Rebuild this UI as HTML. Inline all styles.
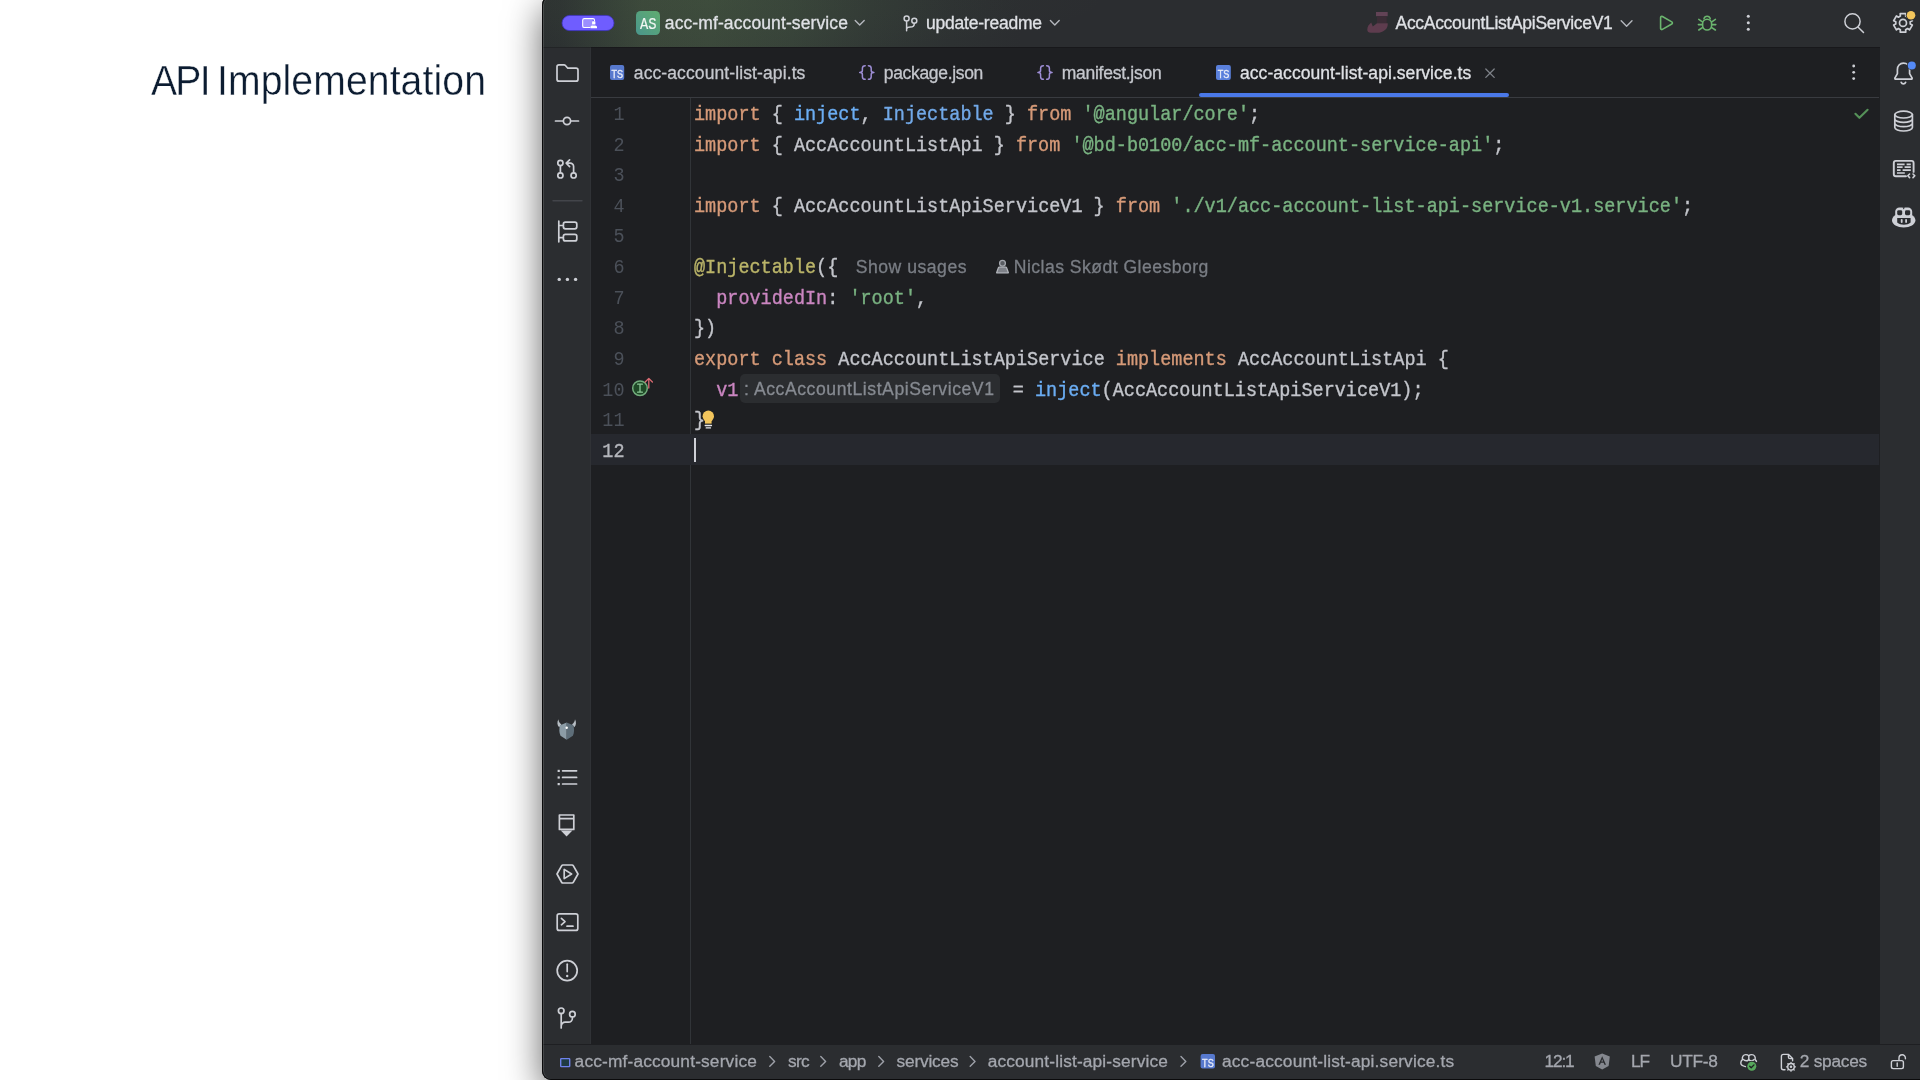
<!DOCTYPE html>
<html><head><meta charset="utf-8"><title>API Implementation</title>
<style>
html,body{margin:0;padding:0}
body{width:1920px;height:1080px;overflow:hidden;position:relative;background:#fff;font-family:"Liberation Sans",sans-serif}
.t{position:absolute;white-space:pre;line-height:1;font-family:"Liberation Sans",sans-serif;-webkit-text-stroke-width:.3px}
.a{position:absolute}
#win{position:absolute;left:542px;top:-4px;width:1400px;height:1084px;background:#1E1F22;border-radius:9px 0 0 9px;box-shadow:0 12px 36px 0 rgba(0,0,0,.6);overflow:hidden}
#wi{position:absolute;left:0;top:4px;width:1400px;height:1080px}
#wi>div{position:absolute}
svg{position:absolute;overflow:visible}
</style></head>
<body>
<div id="win"><div id="wi">
 <div style="left:0;top:0;width:1400px;height:47px;background:#2B2D30"></div>
 <div style="left:0;top:0;width:700px;height:47px;background:linear-gradient(90deg,#2C3031 0,#2D3232 20px,#333C36 58px,#3A463A 100px,#3B483B 170px,#374239 250px,#313835 330px,#2D3132 410px,#2B2D30 480px)"></div>
 <div style="left:0;top:0;width:700px;height:47px;background:radial-gradient(ellipse 400px 52px at 170px 0,rgba(100,135,80,.07),rgba(100,135,80,0))"></div>
 <div style="left:0;top:47px;width:48px;height:997px;background:#2B2D30;border-right:1px solid #303236"></div>
 <div style="left:0;top:47px;width:1400px;height:1px;background:rgba(0,0,0,.2)"></div>
 <div style="left:1338px;top:47px;width:62px;height:997px;background:#2B2D30"></div>
 <div style="left:49px;top:97px;width:1288px;height:1px;background:#393B40"></div>
 <div style="left:148px;top:98px;width:1px;height:946px;background:#313438"></div>
 <div style="left:49px;top:434px;width:1288px;height:31px;background:#26282E"></div>
 <div style="left:657px;top:92.5px;width:310px;height:4.5px;background:#4A78E8;border-radius:2px"></div>
 <div style="left:0;top:1044px;width:1400px;height:36px;background:#2B2D30;border-top:1px solid #1E1F22"></div>
 </div>
 <div style="position:absolute;left:0;top:0;width:1399px;height:1082px;border:1px solid #0b0b0c;border-right:0;border-radius:9px 0 0 9px;box-shadow:inset 1px 0 0 rgba(255,255,255,.13)"></div>
</div>
<div class="a" style="left:694px;top:438px;width:2px;height:24px;background:#CED0D6"></div>
<div id="txt" style="position:absolute;left:0;top:0;width:1920px;height:1080px;will-change:transform">
<span class="t" style='left:150.80px;top:59px;font-size:43px;color:#0C1C31;letter-spacing:-1.932px;transform:scale(0.91,1);transform-origin:0 36px;-webkit-text-stroke:.4px #fff;'>API</span><span class="t" style='left:217.00px;top:59px;font-size:43px;color:#0C1C31;letter-spacing:0.115px;transform:scale(0.91,1);transform-origin:0 36px;-webkit-text-stroke:.4px #fff;'>Implementation</span>
<span class="t" style='left:613.40px;top:107px;font-size:18.5px;color:#4B5059;font-family:"Liberation Mono", monospace;letter-spacing:-0.009px;transform:scale(1,1.1);transform-origin:0 13px;-webkit-text-stroke-width:0;'>1</span><span class="t" style='left:613.40px;top:138px;font-size:18.5px;color:#4B5059;font-family:"Liberation Mono", monospace;letter-spacing:-0.009px;transform:scale(1,1.1);transform-origin:0 13px;-webkit-text-stroke-width:0;'>2</span><span class="t" style='left:613.40px;top:168px;font-size:18.5px;color:#4B5059;font-family:"Liberation Mono", monospace;letter-spacing:-0.009px;transform:scale(1,1.1);transform-origin:0 13px;-webkit-text-stroke-width:0;'>3</span><span class="t" style='left:613.40px;top:199px;font-size:18.5px;color:#4B5059;font-family:"Liberation Mono", monospace;letter-spacing:-0.009px;transform:scale(1,1.1);transform-origin:0 13px;-webkit-text-stroke-width:0;'>4</span><span class="t" style='left:613.40px;top:229px;font-size:18.5px;color:#4B5059;font-family:"Liberation Mono", monospace;letter-spacing:-0.009px;transform:scale(1,1.1);transform-origin:0 13px;-webkit-text-stroke-width:0;'>5</span><span class="t" style='left:613.40px;top:260px;font-size:18.5px;color:#4B5059;font-family:"Liberation Mono", monospace;letter-spacing:-0.009px;transform:scale(1,1.1);transform-origin:0 13px;-webkit-text-stroke-width:0;'>6</span><span class="t" style='left:613.40px;top:291px;font-size:18.5px;color:#4B5059;font-family:"Liberation Mono", monospace;letter-spacing:-0.009px;transform:scale(1,1.1);transform-origin:0 13px;-webkit-text-stroke-width:0;'>7</span><span class="t" style='left:613.40px;top:321px;font-size:18.5px;color:#4B5059;font-family:"Liberation Mono", monospace;letter-spacing:-0.009px;transform:scale(1,1.1);transform-origin:0 13px;-webkit-text-stroke-width:0;'>8</span><span class="t" style='left:613.40px;top:352px;font-size:18.5px;color:#4B5059;font-family:"Liberation Mono", monospace;letter-spacing:-0.009px;transform:scale(1,1.1);transform-origin:0 13px;-webkit-text-stroke-width:0;'>9</span><span class="t" style='left:602.30px;top:383px;font-size:18.5px;color:#4B5059;font-family:"Liberation Mono", monospace;letter-spacing:-0.009px;transform:scale(1,1.1);transform-origin:0 13px;-webkit-text-stroke-width:0;'>10</span><span class="t" style='left:602.30px;top:413px;font-size:18.5px;color:#4B5059;font-family:"Liberation Mono", monospace;letter-spacing:-0.009px;transform:scale(1,1.1);transform-origin:0 13px;-webkit-text-stroke-width:0;'>11</span><span class="t" style='left:602.30px;top:444px;font-size:18.5px;color:#B4B6BC;font-family:"Liberation Mono", monospace;letter-spacing:-0.009px;transform:scale(1,1.1);transform-origin:0 13px;-webkit-text-stroke-width:.35px;'>12</span>
<span class="t" style='left:694.00px;top:107px;font-size:18.5px;color:#D69A78;font-family:"Liberation Mono", monospace;transform:scale(1,1.1);transform-origin:0 13px;-webkit-text-stroke-width:.35px;'>import</span><span class="t" style='left:771.70px;top:107px;font-size:18.5px;color:#C3C5CB;font-family:"Liberation Mono", monospace;letter-spacing:-0.009px;transform:scale(1,1.1);transform-origin:0 13px;-webkit-text-stroke-width:.35px;'>{</span><span class="t" style='left:793.90px;top:107px;font-size:18.5px;color:#6BADF3;font-family:"Liberation Mono", monospace;transform:scale(1,1.1);transform-origin:0 13px;-webkit-text-stroke-width:.35px;'>inject</span><span class="t" style='left:860.50px;top:107px;font-size:18.5px;color:#C3C5CB;font-family:"Liberation Mono", monospace;letter-spacing:-0.009px;transform:scale(1,1.1);transform-origin:0 13px;-webkit-text-stroke-width:.35px;'>,</span><span class="t" style='left:882.70px;top:107px;font-size:18.5px;color:#72A9E8;font-family:"Liberation Mono", monospace;transform:scale(1,1.1);transform-origin:0 13px;-webkit-text-stroke-width:.35px;'>Injectable</span><span class="t" style='left:1004.80px;top:107px;font-size:18.5px;color:#C3C5CB;font-family:"Liberation Mono", monospace;letter-spacing:-0.009px;transform:scale(1,1.1);transform-origin:0 13px;-webkit-text-stroke-width:.35px;'>}</span><span class="t" style='left:1027.00px;top:107px;font-size:18.5px;color:#D69A78;font-family:"Liberation Mono", monospace;letter-spacing:-0.005px;transform:scale(1,1.1);transform-origin:0 13px;-webkit-text-stroke-width:.35px;'>from</span><span class="t" style='left:1082.50px;top:107px;font-size:18.5px;color:#79B281;font-family:"Liberation Mono", monospace;transform:scale(1,1.1);transform-origin:0 13px;-webkit-text-stroke-width:.35px;'>'@angular/core'</span><span class="t" style='left:1249.00px;top:107px;font-size:18.5px;color:#C3C5CB;font-family:"Liberation Mono", monospace;letter-spacing:-0.009px;transform:scale(1,1.1);transform-origin:0 13px;-webkit-text-stroke-width:.35px;'>;</span><span class="t" style='left:694.00px;top:138px;font-size:18.5px;color:#D69A78;font-family:"Liberation Mono", monospace;transform:scale(1,1.1);transform-origin:0 13px;-webkit-text-stroke-width:.35px;'>import</span><span class="t" style='left:771.70px;top:138px;font-size:18.5px;color:#C3C5CB;font-family:"Liberation Mono", monospace;letter-spacing:-0.009px;transform:scale(1,1.1);transform-origin:0 13px;-webkit-text-stroke-width:.35px;'>{</span><span class="t" style='left:793.90px;top:138px;font-size:18.5px;color:#C3C5CB;font-family:"Liberation Mono", monospace;transform:scale(1,1.1);transform-origin:0 13px;-webkit-text-stroke-width:.35px;'>AccAccountListApi</span><span class="t" style='left:993.70px;top:138px;font-size:18.5px;color:#C3C5CB;font-family:"Liberation Mono", monospace;letter-spacing:-0.009px;transform:scale(1,1.1);transform-origin:0 13px;-webkit-text-stroke-width:.35px;'>}</span><span class="t" style='left:1015.90px;top:138px;font-size:18.5px;color:#D69A78;font-family:"Liberation Mono", monospace;letter-spacing:-0.005px;transform:scale(1,1.1);transform-origin:0 13px;-webkit-text-stroke-width:.35px;'>from</span><span class="t" style='left:1071.40px;top:138px;font-size:18.5px;color:#79B281;font-family:"Liberation Mono", monospace;transform:scale(1,1.1);transform-origin:0 13px;-webkit-text-stroke-width:.35px;'>'@bd-b0100/acc-mf-account-service-api'</span><span class="t" style='left:1493.20px;top:138px;font-size:18.5px;color:#C3C5CB;font-family:"Liberation Mono", monospace;letter-spacing:-0.009px;transform:scale(1,1.1);transform-origin:0 13px;-webkit-text-stroke-width:.35px;'>;</span><span class="t" style='left:694.00px;top:199px;font-size:18.5px;color:#D69A78;font-family:"Liberation Mono", monospace;transform:scale(1,1.1);transform-origin:0 13px;-webkit-text-stroke-width:.35px;'>import</span><span class="t" style='left:771.70px;top:199px;font-size:18.5px;color:#C3C5CB;font-family:"Liberation Mono", monospace;letter-spacing:-0.009px;transform:scale(1,1.1);transform-origin:0 13px;-webkit-text-stroke-width:.35px;'>{</span><span class="t" style='left:793.90px;top:199px;font-size:18.5px;color:#C3C5CB;font-family:"Liberation Mono", monospace;transform:scale(1,1.1);transform-origin:0 13px;-webkit-text-stroke-width:.35px;'>AccAccountListApiServiceV1</span><span class="t" style='left:1093.60px;top:199px;font-size:18.5px;color:#C3C5CB;font-family:"Liberation Mono", monospace;letter-spacing:-0.009px;transform:scale(1,1.1);transform-origin:0 13px;-webkit-text-stroke-width:.35px;'>}</span><span class="t" style='left:1115.80px;top:199px;font-size:18.5px;color:#D69A78;font-family:"Liberation Mono", monospace;letter-spacing:-0.005px;transform:scale(1,1.1);transform-origin:0 13px;-webkit-text-stroke-width:.35px;'>from</span><span class="t" style='left:1171.30px;top:199px;font-size:18.5px;color:#79B281;font-family:"Liberation Mono", monospace;transform:scale(1,1.1);transform-origin:0 13px;-webkit-text-stroke-width:.35px;'>'./v1/acc-account-list-api-service-v1.service'</span><span class="t" style='left:1681.90px;top:199px;font-size:18.5px;color:#C3C5CB;font-family:"Liberation Mono", monospace;letter-spacing:-0.009px;transform:scale(1,1.1);transform-origin:0 13px;-webkit-text-stroke-width:.35px;'>;</span><span class="t" style='left:694.00px;top:260px;font-size:18.5px;color:#BBB569;font-family:"Liberation Mono", monospace;transform:scale(1,1.1);transform-origin:0 13px;-webkit-text-stroke-width:.35px;'>@Injectable</span><span class="t" style='left:816.10px;top:260px;font-size:18.5px;color:#C3C5CB;font-family:"Liberation Mono", monospace;letter-spacing:-0.009px;transform:scale(1,1.1);transform-origin:0 13px;-webkit-text-stroke-width:.35px;'>({</span><span class="t" style='left:716.20px;top:291px;font-size:18.5px;color:#CB86C1;font-family:"Liberation Mono", monospace;transform:scale(1,1.1);transform-origin:0 13px;-webkit-text-stroke-width:.35px;'>providedIn</span><span class="t" style='left:827.20px;top:291px;font-size:18.5px;color:#C3C5CB;font-family:"Liberation Mono", monospace;letter-spacing:-0.009px;transform:scale(1,1.1);transform-origin:0 13px;-webkit-text-stroke-width:.35px;'>:</span><span class="t" style='left:849.40px;top:291px;font-size:18.5px;color:#79B281;font-family:"Liberation Mono", monospace;transform:scale(1,1.1);transform-origin:0 13px;-webkit-text-stroke-width:.35px;'>'root'</span><span class="t" style='left:916.00px;top:291px;font-size:18.5px;color:#C3C5CB;font-family:"Liberation Mono", monospace;letter-spacing:-0.009px;transform:scale(1,1.1);transform-origin:0 13px;-webkit-text-stroke-width:.35px;'>,</span><span class="t" style='left:694.00px;top:321px;font-size:18.5px;color:#C3C5CB;font-family:"Liberation Mono", monospace;letter-spacing:-0.009px;transform:scale(1,1.1);transform-origin:0 13px;-webkit-text-stroke-width:.35px;'>})</span><span class="t" style='left:694.00px;top:352px;font-size:18.5px;color:#D69A78;font-family:"Liberation Mono", monospace;transform:scale(1,1.1);transform-origin:0 13px;-webkit-text-stroke-width:.35px;'>export</span><span class="t" style='left:771.70px;top:352px;font-size:18.5px;color:#D69A78;font-family:"Liberation Mono", monospace;transform:scale(1,1.1);transform-origin:0 13px;-webkit-text-stroke-width:.35px;'>class</span><span class="t" style='left:838.30px;top:352px;font-size:18.5px;color:#C3C5CB;font-family:"Liberation Mono", monospace;transform:scale(1,1.1);transform-origin:0 13px;-webkit-text-stroke-width:.35px;'>AccAccountListApiService</span><span class="t" style='left:1115.80px;top:352px;font-size:18.5px;color:#D69A78;font-family:"Liberation Mono", monospace;transform:scale(1,1.1);transform-origin:0 13px;-webkit-text-stroke-width:.35px;'>implements</span><span class="t" style='left:1237.90px;top:352px;font-size:18.5px;color:#C3C5CB;font-family:"Liberation Mono", monospace;transform:scale(1,1.1);transform-origin:0 13px;-webkit-text-stroke-width:.35px;'>AccAccountListApi</span><span class="t" style='left:1437.70px;top:352px;font-size:18.5px;color:#C3C5CB;font-family:"Liberation Mono", monospace;letter-spacing:-0.009px;transform:scale(1,1.1);transform-origin:0 13px;-webkit-text-stroke-width:.35px;'>{</span><span class="t" style='left:716.20px;top:383px;font-size:18.5px;color:#CB86C1;font-family:"Liberation Mono", monospace;letter-spacing:-0.009px;transform:scale(1,1.1);transform-origin:0 13px;-webkit-text-stroke-width:.35px;'>v1</span><span class="t" style='left:1012.80px;top:383px;font-size:18.5px;color:#C3C5CB;font-family:"Liberation Mono", monospace;letter-spacing:-0.009px;transform:scale(1,1.1);transform-origin:0 13px;-webkit-text-stroke-width:.35px;'>=</span><span class="t" style='left:1035.00px;top:383px;font-size:18.5px;color:#6BADF3;font-family:"Liberation Mono", monospace;transform:scale(1,1.1);transform-origin:0 13px;-webkit-text-stroke-width:.35px;'>inject</span><span class="t" style='left:1101.60px;top:383px;font-size:18.5px;color:#C3C5CB;font-family:"Liberation Mono", monospace;transform:scale(1,1.1);transform-origin:0 13px;-webkit-text-stroke-width:.35px;'>(AccAccountListApiServiceV1);</span><span class="t" style='left:694.00px;top:413px;font-size:18.5px;color:#C3C5CB;font-family:"Liberation Mono", monospace;letter-spacing:-0.009px;transform:scale(1,1.1);transform-origin:0 13px;-webkit-text-stroke-width:.35px;'>}</span>
<span class="t" style='left:855.80px;top:259px;font-size:17.6px;color:#7A7E85;letter-spacing:0.505px;'>Show usages</span><span class="t" style='left:1013.80px;top:259px;font-size:17.6px;color:#7A7E85;letter-spacing:0.463px;'>Niclas Skødt Gleesborg</span><div style="position:absolute;left:740px;top:374px;width:260px;height:29px;background:#2B2D30;border-radius:5px"></div><span class="t" style='left:744.00px;top:381px;font-size:17.6px;color:#868A91;letter-spacing:0.564px;'>: AccAccountListApiServiceV1</span>
<span class="t" style='left:664.80px;top:15px;font-size:17.5px;color:#DFE1E5;letter-spacing:0.105px;'>acc-mf-account-service</span><span class="t" style='left:926.00px;top:15px;font-size:17.5px;color:#DFE1E5;letter-spacing:-0.223px;'>update-readme</span><span class="t" style='left:1395.50px;top:15px;font-size:17.5px;color:#DFE1E5;letter-spacing:-0.296px;'>AccAccountListApiServiceV1</span>
<span class="t" style='left:633.80px;top:65px;font-size:17.5px;color:#C5C7CD;letter-spacing:0.107px;'>acc-account-list-api.ts</span><span class="t" style='left:883.80px;top:65px;font-size:17.5px;color:#C5C7CD;letter-spacing:-0.328px;'>package.json</span><span class="t" style='left:1061.70px;top:65px;font-size:17.5px;color:#C5C7CD;letter-spacing:-0.262px;'>manifest.json</span><span class="t" style='left:1240.00px;top:65px;font-size:17.5px;color:#DFE1E5;letter-spacing:0.057px;'>acc-account-list-api.service.ts</span>
<span class="t" style='left:574.60px;top:1053px;font-size:17.3px;color:#A4A7AE;letter-spacing:0.172px;'>acc-mf-account-service</span><span class="t" style='left:788.00px;top:1053px;font-size:17.3px;color:#A4A7AE;letter-spacing:-0.682px;'>src</span><span class="t" style='left:839.00px;top:1053px;font-size:17.3px;color:#A4A7AE;letter-spacing:-0.781px;'>app</span><span class="t" style='left:896.50px;top:1053px;font-size:17.3px;color:#A4A7AE;letter-spacing:-0.174px;'>services</span><span class="t" style='left:987.70px;top:1053px;font-size:17.3px;color:#A4A7AE;letter-spacing:0.149px;'>account-list-api-service</span><span class="t" style='left:1222.00px;top:1053px;font-size:17.3px;color:#A4A7AE;letter-spacing:0.185px;'>acc-account-list-api.service.ts</span><span class="t" style='left:1544.50px;top:1053px;font-size:17.3px;color:#A4A7AE;letter-spacing:-1.135px;'>12:1</span><span class="t" style='left:1631.00px;top:1053px;font-size:17.3px;color:#A4A7AE;letter-spacing:-1.086px;'>LF</span><span class="t" style='left:1670.00px;top:1053px;font-size:17.3px;color:#A4A7AE;letter-spacing:-0.274px;'>UTF-8</span><span class="t" style='left:1799.70px;top:1053px;font-size:17.3px;color:#A4A7AE;letter-spacing:-0.234px;'>2 spaces</span>
</div>
<svg width="1920" height="1080" viewBox="0 0 1920 1080" style="left:0;top:0" fill="none" stroke-linecap="round" stroke-linejoin="round">
<!-- ===== left tool strip ===== -->
<g stroke="#CED0D6" stroke-width="1.7">
 <!-- folder -->
 <path d="M557 67v12.2a2 2 0 0 0 2 2h17a2 2 0 0 0 2-2v-9a2 2 0 0 0-2-2h-8.2l-2.6-2.9a1.6 1.6 0 0 0-1.2-.5H559a2 2 0 0 0-2 2z"/>
 <!-- commit -->
 <circle cx="567" cy="121" r="3.6"/><path d="M555.5 121h7.6M570.9 121h7.6"/>
 <!-- pull request -->
 <circle cx="560.4" cy="163" r="2.6"/><circle cx="560.4" cy="175.4" r="2.6"/><circle cx="573.6" cy="175.4" r="2.6"/>
 <path d="M560.4 165.8v6.8M573.6 172.6v-6a3.4 3.4 0 0 0-3.4-3.4h-3.4M569.6 159.8l-3.4 3.4 3.4 3.4"/>
 <!-- structure -->
 <path d="M558.8 221.2v20.6M558.8 225.5h4M558.8 237.6h4"/>
 <rect x="563.4" y="222.2" width="13.4" height="6.6" rx="2"/><rect x="563.4" y="234.3" width="13.4" height="6.6" rx="2"/>
 <!-- list -->
 <path d="M562.6 770.8h14M562.6 777.4h14M562.6 784h14"/>
 <!-- marker -->
 <path d="M559.4 815h14.4v14.4h-14.4zM559.4 818.6h14.4"/>
 <!-- hexagon run -->
 <path d="M557 874l4.6-8.2a1.6 1.6 0 0 1 1.4-.8h9a1.6 1.6 0 0 1 1.4.8l4.6 8.2-4.6 8.2a1.6 1.6 0 0 1-1.4.8h-9a1.6 1.6 0 0 1-1.4-.8z"/>
 <path d="M564.2 869.4v9.2l7.4-4.6z"/>
 <!-- terminal -->
 <rect x="557.2" y="913.8" width="20.6" height="16.6" rx="2"/><path d="M561.4 918.4l3.6 3.2-3.6 3.2M567 926.2h6"/>
 <!-- problems -->
 <circle cx="567.2" cy="970.6" r="10"/><path d="M567.2 964.2v7.4"/>
 <!-- git -->
 <circle cx="561.2" cy="1010.8" r="2.8"/><circle cx="572.4" cy="1014.2" r="2.8"/>
 <path d="M561.2 1013.6v14.4M572.4 1017v1.2a4 4 0 0 1-4 4h-3.2a4 4 0 0 0-4 4"/>
</g>
<g fill="#CED0D6">
 <circle cx="559.2" cy="279.4" r="1.7"/><circle cx="567.4" cy="279.4" r="1.7"/><circle cx="575.6" cy="279.4" r="1.7"/>
 <rect x="557.6" y="769.8" width="2.2" height="2.2"/><rect x="557.6" y="776.4" width="2.2" height="2.2"/><rect x="557.6" y="783" width="2.2" height="2.2"/>
 <path d="M560.8 830.6h11.600l-5.800 5.800z"/>
 <circle cx="567.2" cy="976" r="1.2"/>
</g>
<path d="M553 200.8h29" stroke="#43454A" stroke-width="1.4"/>
<!-- OPA helmet -->
<g>
 <path d="M559.2 727.2c-2-1.6-2.4-5-.8-8 .2 2.4 1.4 4 3 5z" fill="#B7BEC4"/>
 <path d="M574.2 727.2c2-1.6 2.4-5 .8-8-.2 2.4-1.4 4-3 5z" fill="#B7BEC4"/>
 <path d="M566.7 722.6l-6.6 2.6c-1.2 3.6-1 7.4.4 10.6l6.2 4z" fill="#8C9CA6"/>
 <path d="M566.7 722.6l6.6 2.6c1.2 3.6 1 7.4-.4 10.6l-6.2 4z" fill="#5E6E79"/>
 <circle cx="566.7" cy="727.8" r="1.2" fill="#fff"/>
</g>
<!-- ===== right tool strip ===== -->
<g stroke="#CED0D6" stroke-width="1.7">
 <!-- bell -->
 <path d="M1903.4 63.2c-3.6 0-6 2.8-6 6.2v4.2l-2.4 4.2a.9.9 0 0 0 .8 1.4h15.4a.9.9 0 0 0 .8-1.4l-2.4-4.2v-4.200c0-3.400-2.400-6.200-6.200-6.200z"/>
 <path d="M1901.2 82.400a2.400 2.400 0 0 0 4.400 0"/>
 <!-- database -->
 <ellipse cx="1903.600" cy="114.600" rx="8.800" ry="3.400"/>
 <path d="M1894.800 114.600v13c0 1.900 3.900 3.400 8.800 3.400s8.800-1.500 8.800-3.400v-13M1894.800 119c0 1.900 3.900 3.400 8.800 3.400s8.800-1.500 8.800-3.400M1894.800 123.300c0 1.900 3.900 3.400 8.800 3.400s8.800-1.500 8.800-3.400"/>
 <!-- services / code-with-me -->
 <path d="M1906 176.300h-10.200a2 2 0 0 1-2-2v-11.400a2 2 0 0 1 2-2h15.800a2 2 0 0 1 2 2v9" stroke-width="1.900"/>
 <path d="M1897 164.300h7.600M1906.600 164.300h4.200M1897 167.200h5.600M1904.600 167.200h6.200M1897 170.100h3.600M1902.600 170.100h8.200M1897 173h7.800" stroke-width="1.700" stroke-linecap="butt"/>
 <path d="M1909.600 174l-1.800 1.800 1.800 1.800M1913 174l1.800 1.800-1.800 1.800" stroke-width="1.600"/>
</g>
<g>
 <rect x="1895.200" y="207.600" width="17" height="12" rx="4.200" fill="#CED0D6"/>
 <ellipse cx="1903.700" cy="220.300" rx="11.700" ry="7.300" fill="#CED0D6"/>
 <path d="M1902.500 207.200h2.400l-1.200 2.200z" fill="#2B2D30"/>
 <rect x="1897.200" y="210.200" width="5" height="5" rx="1.400" fill="#2B2D30"/>
 <rect x="1905" y="210.200" width="5.200" height="5" rx="1.400" fill="#2B2D30"/>
 <path d="M1897.200 218.100h13.400v4.400c-1.800 1.500-4.100 2.200-6.700 2.200s-4.900-.7-6.700-2.200z" fill="#2B2D30"/>
 <rect x="1900.800" y="218.900" width="1.800" height="4" rx=".9" fill="#CED0D6"/>
 <rect x="1905.200" y="218.900" width="1.800" height="4" rx=".9" fill="#CED0D6"/>
</g>
<circle cx="1911.800" cy="65.400" r="4.800" fill="#2B2D30"/><circle cx="1911.800" cy="65.400" r="4" fill="#548AF7"/>
</svg>
<svg width="1920" height="1080" viewBox="0 0 1920 1080" style="left:0;top:0" fill="none" stroke-linecap="round" stroke-linejoin="round">
<defs>
 <linearGradient id="asg" x1="0" y1="1" x2="1" y2="0"><stop offset="0" stop-color="#4A968C"/><stop offset="1" stop-color="#60AC70"/></linearGradient>
</defs>
<!-- ===== title bar ===== -->
<rect x="562" y="15.400" width="52" height="15.200" rx="7.600" fill="#6F5DFF" stroke="#3F33C8" stroke-width=".8"/>
<rect x="583.200" y="19.200" width="9.400" height="7.800" fill="#9B8EFF"/>
<path d="M590 27.500h-5.700a1.600 1.600 0 0 1-1.600-1.600v-5.700a1.600 1.600 0 0 1 1.600-1.600h8.600a1.600 1.600 0 0 1 1.600 1.600v.4" stroke="#fff" stroke-width="1.150" fill="none"/>
<rect x="592.100" y="21.300" width="3.300" height="3.200" rx=".5" fill="#fff"/><path d="M590.500 28.200v-1.100a1.700 1.700 0 0 1 1.700-1.700h3.100a1.700 1.700 0 0 1 1.700 1.700v1.100z" fill="#fff"/>
<rect x="636" y="11" width="24" height="24" rx="4.500" fill="url(#asg)"/>
<text x="648.200" y="29" font-family="Liberation Mono, monospace" font-size="16" font-weight="400" stroke="#F2F7F3" stroke-width=".15" fill="#F2F7F3" text-anchor="middle" textLength="16.500" lengthAdjust="spacingAndGlyphs">AS</text>
<g stroke="#B4B7BD" stroke-width="1.400"><path d="M855.200 20.600l4.500 4.500 4.500-4.500"/>
 <path d="M1050.400 20.600l4.400 4.400 4.400-4.400"/>
 <path d="M1621.200 20.800l5.400 5.400 5.400-5.400"/></g>
<g stroke="#CED0D6" stroke-width="1.500">
 <!-- branch -->
 <circle cx="906.600" cy="18.600" r="2.500"/><circle cx="914.300" cy="20.800" r="2.500"/>
 <path d="M906.600 21.200v9.600M914.300 23.400c0 2.600-1.600 3.600-4 3.600-1.900 0-3.200.6-3.700 1.800"/>
 <!-- search -->
 <circle cx="1852.500" cy="21.400" r="7.600"/><path d="M1858.200 27.200l5.300 5.300"/>
 <!-- gear -->
 <path d="M1900.19 13.72 L1905.81 13.72 L1905.62 16.08 L1907.59 17.23 L1909.55 15.88 L1912.35 20.74 L1910.21 21.76 L1910.21 24.04 L1912.35 25.06 L1909.55 29.92 L1907.59 28.57 L1905.62 29.72 L1905.81 32.08 L1900.19 32.08 L1900.38 29.72 L1898.41 28.57 L1896.45 29.92 L1893.65 25.06 L1895.79 24.04 L1895.79 21.76 L1893.65 20.74 L1896.45 15.88 L1898.41 17.23 L1900.38 16.08z" stroke-width="1.700"/><circle cx="1903" cy="22.900" r="3.500" stroke-width="1.700"/>
 <!-- tab close -->
 <path d="M1485.800 69l8.400 8.400M1494.200 69l-8.400 8.400" stroke="#7E8289" stroke-width="1.300"/>
</g>
<g fill="#CED0D6">
 <circle cx="1748.300" cy="16.200" r="1.500"/><circle cx="1748.300" cy="22.700" r="1.500"/><circle cx="1748.300" cy="29.300" r="1.500"/>
 <circle cx="1853.700" cy="66" r="1.400"/><circle cx="1853.700" cy="72.300" r="1.400"/><circle cx="1853.700" cy="78.600" r="1.400"/>
</g>
<circle cx="1911" cy="15.200" r="5.200" fill="#2B2D30"/><circle cx="1911" cy="15.200" r="4.300" fill="#F2C55C"/>
<!-- jest boot (dimmed) -->
<path d="M1376 12h11.700v4.200h-11.700z" fill="#624356"/>
<path d="M1377 16.200h9.700v7h-9.700z" fill="#3B2C36"/>
<path d="M1368.400 25.600l2.800-3 1.600 3.800 4.200-3.200h10.700c.6 4.800-3.200 9.600-11.200 9.600h-5.600c-2.400 0-3.600-1.200-3.600-3 0-1.600.4-3 1.100-4.200z" fill="#5E3C4E"/>
<!-- run / debug -->
<path d="M1660.600 17.600v10.800a1.200 1.200 0 0 0 1.800 1l9.400-5.400a1.200 1.200 0 0 0 0-2.100l-9.400-5.400a1.200 1.200 0 0 0-1.800 1.100z" stroke="#6BB56E" stroke-width="1.600"/>
<g stroke="#6BB56E" stroke-width="1.600">
 <rect x="1702.600" y="19.200" width="9" height="10.800" rx="4.500"/>
 <path d="M1704 18.600a3.200 3.200 0 0 1 6.200 0M1698.800 19.400l3.600 2.400M1715.400 19.400l-3.600 2.400M1698.400 24.600h4M1715.800 24.600h-4M1698.800 30l3.600-2.400M1715.400 30l-3.600-2.400"/>
</g>
<!-- ===== tab icons ===== -->
<g font-family="Liberation Sans, sans-serif" font-weight="400" font-size="10.500" fill="#E8ECF8" stroke="#E8ECF8" stroke-width=".35" text-anchor="middle">
 <rect x="610" y="65" width="14.200" height="15" rx="2" fill="#5779CE" stroke="none"/><text x="617.300" y="78.100" textLength="11.600" lengthAdjust="spacingAndGlyphs">TS</text>
 <rect x="1216" y="65" width="14.800" height="15" rx="2" fill="#5A80DC" stroke="none"/><text x="1223.500" y="78.100" textLength="11.600" lengthAdjust="spacingAndGlyphs">TS</text>
 <rect x="1200.600" y="1054" width="14.400" height="14.600" rx="2" fill="#5779CE" stroke="none"/><text x="1207.900" y="1066.800" textLength="11.600" lengthAdjust="spacingAndGlyphs">TS</text>
</g>
<g stroke="#9D8DD4" stroke-width="1.500">
 <path id="lb" d="M865.200 65.700c-1.900 0-2.800.9-2.800 2.600v2.300c0 1.300-.9 1.900-2.700 1.900 1.800 0 2.700.6 2.700 1.900v2.300c0 1.700.9 2.600 2.800 2.600"/>
 <path d="M868.400 65.700c1.900 0 2.800.9 2.800 2.600v2.300c0 1.300.9 1.900 2.700 1.900-1.800 0-2.700.6-2.700 1.900v2.300c0 1.700-.9 2.600-2.800 2.600"/>
 <path d="M1043.400 65.700c-1.900 0-2.800.9-2.800 2.600v2.300c0 1.300-.9 1.900-2.700 1.900 1.800 0 2.700.6 2.700 1.900v2.300c0 1.700.9 2.600 2.800 2.600"/>
 <path d="M1046.600 65.700c1.900 0 2.800.9 2.800 2.600v2.300c0 1.300.9 1.900 2.700 1.900-1.800 0-2.700.6-2.700 1.900v2.300c0 1.700-.9 2.600-2.800 2.600"/>
</g>
<!-- check -->
<path d="M1855.400 113.800l4 4 8.200-8" stroke="#559259" stroke-width="2.100"/>
<!-- gutter implement icon -->
<circle cx="640" cy="388.200" r="7.300" fill="#1F4A27" stroke="#73AE7D" stroke-width="1.500"/>
<path d="M637.600 384.200h4.800M640 384.200v8M637.600 392.200h4.800" stroke="#8CC695" stroke-width="1.300"/>
<path d="M648.800 388v-9.200M645.200 382l3.600-3.600 3.600 3.600" stroke="#DB6B73" stroke-width="1.300"/>
<!-- bulb -->
<circle cx="708.300" cy="416.300" r="5.700" fill="#F2C55C"/><path d="M705 419h6.600v4.600h-6.600z" fill="#F2C55C"/>
<path d="M705.200 425.500h6.300M706.200 427.900h4.300" stroke="#E4E5E9" stroke-width="1.300"/>
<!-- author -->
<circle cx="1002.500" cy="263.200" r="2.900" stroke="#A5A8AF" stroke-width="1.300" fill="#5A5D63"/>
<path d="M996.600 272.800l1.800-5a1 1 0 0 1 1-.6h6.200a1 1 0 0 1 1 .6l1.800 5z" fill="#7E8188" stroke="#B4B7BD" stroke-width="1.200"/>
<!-- ===== status bar ===== -->
<rect x="560.700" y="1058.600" width="9" height="8" rx=".6" fill="#1F3B44" stroke="#6E82EC" stroke-width="1.400"/>
<g stroke="#9DA0A8" stroke-width="1.400">
 <path d="M769.800 1056.600l4.800 4.800-4.800 4.800M820.800 1056.600l4.800 4.800-4.800 4.800M878.800 1056.600l4.800 4.800-4.800 4.800M970.200 1056.600l4.800 4.800-4.800 4.800M1181 1056.600l4.800 4.800-4.800 4.800"/>
</g>
<!-- angular -->
<path d="M1602.200 1053.600l7.600 2.800-1.200 9.600-6.400 3.400-6.400-3.400-1.200-9.600z" fill="#85888F"/>
<path d="M1602.200 1056.200l-3.800 8.600h1.600l.8-2h2.800l.8 2h1.600zM1602.200 1059.200l.9 2.200h-1.800z" fill="#2B2D30"/>
<!-- copilot status -->
<g stroke="#CED0D6" stroke-width="1.400">
 <path d="M1745.600 1066.600c-3-.6-4.800-2-4.800-3.600 0-1.400.6-2.600 1.600-3.400-.4-2.800.8-5 3.400-5 1.400 0 2.400.4 3 1.200.6-.8 1.600-1.200 3-1.200 2.600 0 3.800 2.200 3.400 5 .6.500 1 1.100 1.300 1.800"/>
 <path d="M1743.400 1059.400c.6 1 1.800 1.400 3 1.400 1.600 0 2.400-.8 2.400-2.400v-2.600M1754.200 1059.400c-.6 1-1.800 1.400-3 1.400-1.600 0-2.400-.8-2.400-2.400"/>
</g>
<circle cx="1751.800" cy="1066.200" r="5.400" fill="#2B2D30"/><circle cx="1751.800" cy="1066.200" r="4.500" fill="#57A85C"/>
<path d="M1749.700 1066.300l1.500 1.500 2.800-2.900" stroke="#1E1F22" stroke-width="1.300"/>
<!-- indent -->
<g stroke="#CED0D6" stroke-width="1.400">
 <path d="M1785 1069.800h-1.600a2 2 0 0 1-2-2v-11.400a2 2 0 0 1 2-2h5.200l4 4v2.400M1788.400 1054.600v2.400a1.600 1.600 0 0 0 1.600 1.600h2.400"/>
 <circle cx="1791" cy="1066.800" r="3.300"/><circle cx="1791" cy="1066.800" r=".6"/>
 <path d="M1791 1062.300v1.200M1791 1070.100v1.200M1786.500 1066.800h1.200M1794.300 1066.800h1.200M1787.800 1063.600l.9.900M1793.300 1069.100l.9.900M1787.800 1070l.9-.9M1793.300 1064.500l.9-.9" stroke-width="1.200"/>
 <!-- lock -->
 <rect x="1891.400" y="1060.600" width="12" height="8" rx="1.800"/><path d="M1897.200 1063v3.200M1899 1060.400v-2.400a3.200 3.200 0 0 1 6.400 0v.8"/>
</g>
</svg>

</body></html>
